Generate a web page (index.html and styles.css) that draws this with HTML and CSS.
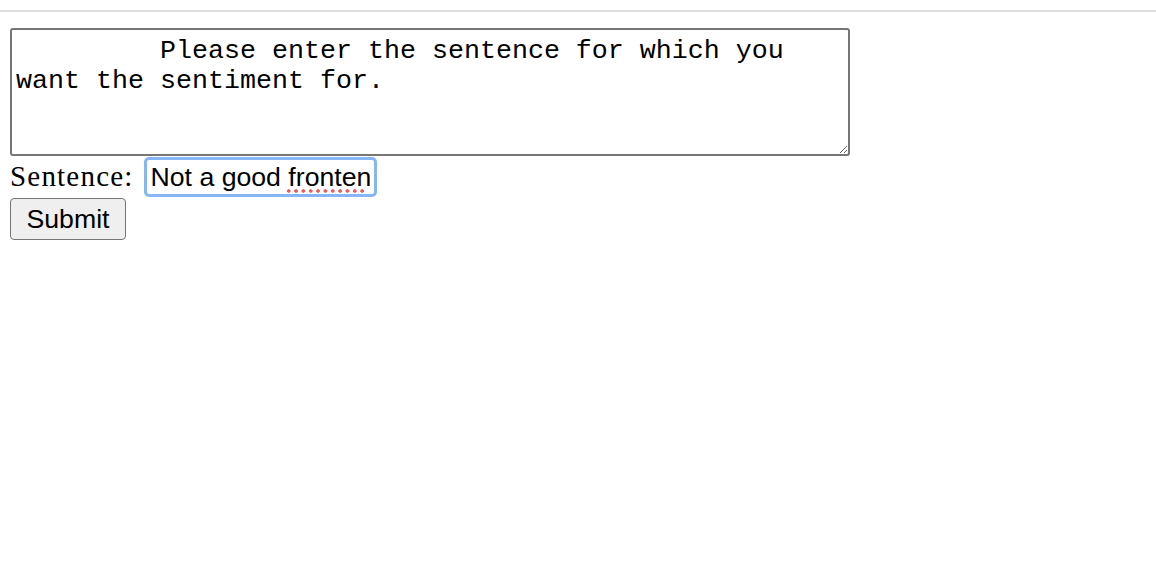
FILE: index.html
```html
<!DOCTYPE html>
<html>
<head>
<meta charset="utf-8">
<link rel="stylesheet" href="styles.css">
</head>
<body>
<div class="topbar"></div>
<form class="form">
<textarea class="prompt">         Please enter the sentence for which you want the sentiment for.</textarea>
<div class="row">
<label class="label" for="s">Sentence:</label>
<span class="field">
<input class="input" id="s" type="text" value="Not a good frontend" spellcheck="false">
<span class="squiggle"></span>
</span>
</div>
<button class="submit" type="button">Submit</button>
</form>
</body>
</html>
```
FILE: styles.css
```css
html, body {
  margin: 0;
  padding: 0;
  background: #ffffff;
}
.topbar {
  height: 10px;
  border-bottom: 2px solid #dedede;
}
.form {
  display: flex;
  flex-direction: column;
  align-items: flex-start;
  padding: 16px 10px 0 10px;
}
.prompt {
  box-sizing: border-box;
  width: 840px;
  height: 128px;
  margin: 0;
  padding: 6px 4px 4px 4px;
  border: 2px solid #767676;
  border-radius: 3px;
  font-family: "Liberation Mono", monospace;
  font-size: 26.67px;
  line-height: 30px;
  color: #000;
  resize: both;
  overflow: hidden;
}
.row {
  display: flex;
  align-items: baseline;
  margin-top: 1px;
}
.label {
  font-family: "Liberation Serif", serif;
  font-size: 29px;
  letter-spacing: 1.2px;
  color: #000;
  margin-right: 10px;
}
.field {
  position: relative;
  display: inline-block;
}
.input {
  box-sizing: border-box;
  width: 233px;
  height: 40px;
  margin: 0;
  padding: 0 4px;
  border: 3px solid #86b6f3;
  border-radius: 5px;
  outline: none;
  font-family: "Liberation Sans", Arial, sans-serif;
  font-size: 26.67px;
  color: #000;
  background: #fff;
}
.squiggle {
  position: absolute;
  left: 141px;
  top: 32px;
  width: 81px;
  height: 4px;
  background-image: radial-gradient(circle, #ef5b5b 1.5px, rgba(239, 91, 91, 0) 2px);
  background-size: 7.35px 4px;
  background-repeat: repeat-x;
}
.submit {
  box-sizing: border-box;
  width: 116px;
  height: 42px;
  margin: 1px 0 0 0;
  padding: 0;
  border: 1px solid #767676;
  border-radius: 4px;
  background: #efefef;
  font-family: "Liberation Sans", Arial, sans-serif;
  font-size: 26.67px;
  color: #000;
}
```
